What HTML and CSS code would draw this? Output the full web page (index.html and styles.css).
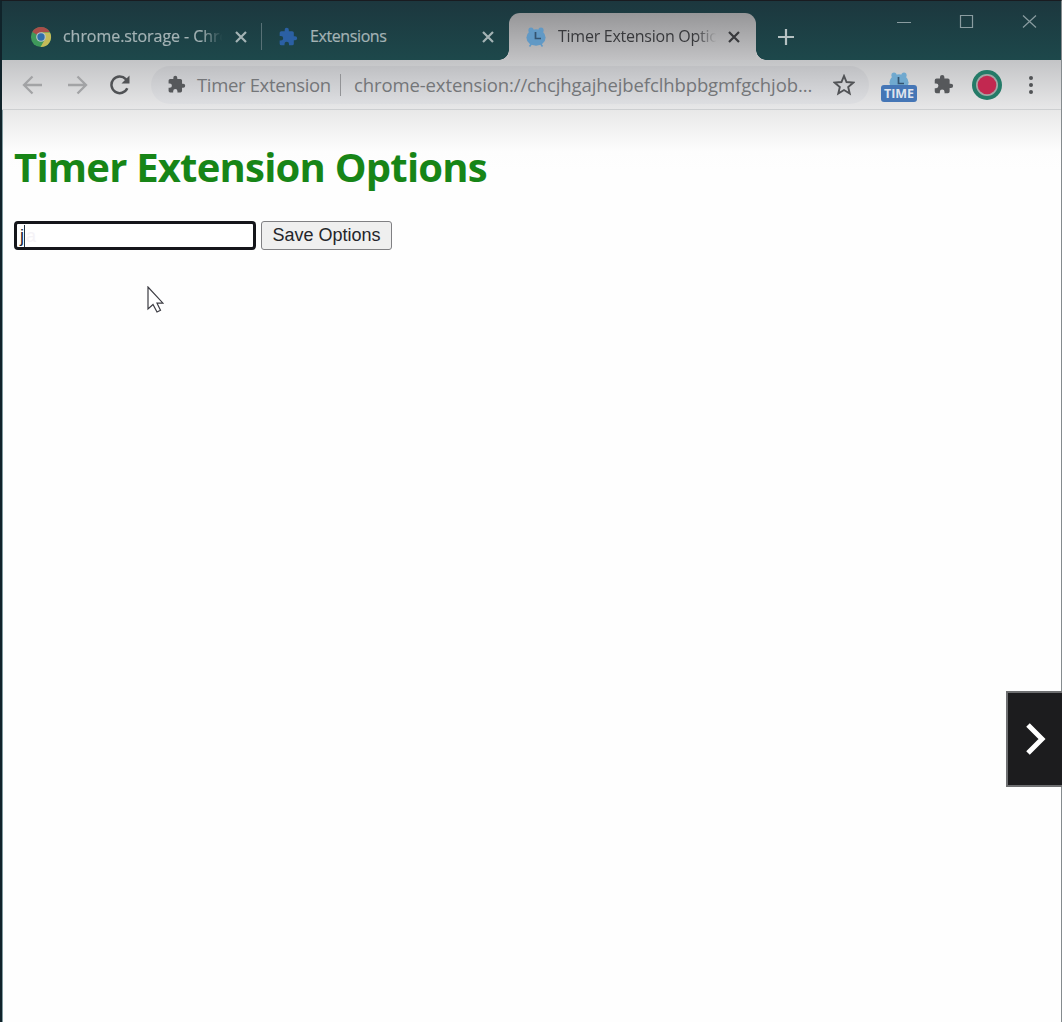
FILE: index.html
```
<!DOCTYPE html>
<html lang="en">
<head>
<meta charset="utf-8">
<title>Timer Extension Options</title>
<link rel="stylesheet" href="styles.css">
</head>
<body>
<svg class="defs" width="0" height="0">
  <symbol id="puzzle" viewBox="0 0 24 24"><path d="M20.500 11H19V7a2 2 0 0 0-2-2h-4V3.500a2.500 2.500 0 0 0-5 0V5H4a2 2 0 0 0-2 2v3.800h1.500a2.700 2.700 0 0 1 0 5.400H2V20a2 2 0 0 0 2 2h3.800v-1.500a2.700 2.700 0 0 1 5.400 0V22H17a2 2 0 0 0 2-2v-4h1.500a2.500 2.500 0 0 0 0-5z"/></symbol>
  <symbol id="cross" viewBox="0 0 12 12"><path d="M1 1 11 11M11 1 1 11" fill="none" stroke="currentColor" stroke-width="2.200"/></symbol>
  <symbol id="clock" viewBox="0 0 20 20"><circle cx="5" cy="3.200" r="2.600"/><circle cx="15" cy="3.200" r="2.600"/><path d="M3.500 19.500 6 16M16.500 19.500 14 16" stroke="currentColor" stroke-width="1.600"/><ellipse cx="10" cy="10.500" rx="9.600" ry="8.200"/><path d="M9.500 5v6.500H15" fill="none" stroke="#34536f" stroke-width="1.700"/></symbol>
</svg>
<div class="window">
  <header class="tabstrip">
    <div class="tab tab-first">
      <svg class="favicon chrome" viewBox="0 0 24 24"><circle cx="12" cy="12" r="11" fill="#3f995b"/><path d="M12 12 2.500 6.500A11 11 0 0 1 21.500 6.500L12 7z" fill="#a94d49"/><path d="M12 7h9.800A11 11 0 0 1 11.500 23L16.300 14.500z" fill="#c5bb59"/><circle cx="12" cy="12" r="5.300" fill="#b5c2c9"/><circle cx="12" cy="12" r="4" fill="#2f6eab"/></svg>
      <span class="title storage">chrome.storage - Chro</span>
      <svg class="close"><use href="#cross"/></svg>
    </div>
    <div class="tab tab-second">
      <svg class="favicon blue"><use href="#puzzle"/></svg>
      <span class="title extensions">Extensions</span>
      <svg class="close"><use href="#cross"/></svg>
    </div>
    <div class="tab tab-active">
      <svg class="favicon alarm"><use href="#clock"/></svg>
      <span class="title active-title">Timer Extension Optio</span>
      <svg class="close"><use href="#cross"/></svg>
    </div>
    <svg class="newtab" viewBox="0 0 18 18"><path d="M9 1v16M1 9h16" stroke="currentColor" stroke-width="2.200"/></svg>
    <svg class="controls" viewBox="0 0 142 16" fill="none" stroke="currentColor" stroke-width="1.200"><path d="M1 8.500h14M127 1.500l13 12M140 1.500l-13 12"/><path d="M64.500 1.500h12v12h-12z"/></svg>
  </header>
  <div class="toolbar">
    <svg class="nav" viewBox="0 0 22 20"><path d="M20 10H3M10.500 1.500 2 10l8.500 8.500"/></svg>
    <svg class="nav forward" viewBox="0 0 22 20"><path d="M2 10h17M11.500 1.500 20 10l-8.500 8.500"/></svg>
    <svg class="reload" viewBox="0 0 20 20"><path d="M17.300 13.300A8.300 8.300 0 1 1 15.800 4.100L18 6.500" fill="none" stroke="#505255" stroke-width="2.500"/><path d="M19.500 0.500V8.500H11.500z" fill="#505255"/></svg>
    <div class="address">
      <svg class="site"><use href="#puzzle"/></svg>
      <span class="site-name">Timer Extension</span>
      <span class="divider"></span>
      <span class="url">chrome-extension://chcjhgajhejbefclhbpbgmfgchjob...</span>
      <svg class="star" viewBox="0 0 20 20"><path d="M10 1.800 12.300 7.300 18.500 7.800 13.800 11.800 15.200 17.800 10 14.600 4.800 17.800 6.200 11.800 1.500 7.800 7.700 7.300z" fill="none" stroke="#515356" stroke-width="1.700"/></svg>
    </div>
    <div class="timer-extension"><svg class="mini-clock"><use href="#clock"/></svg><span class="badge">TIME</span></div>
    <svg class="puzzle-button"><use href="#puzzle"/></svg>
    <svg class="avatar" viewBox="0 0 30 30"><circle cx="15" cy="15" r="15" fill="#247b68"/><circle cx="15" cy="15" r="11" fill="#a3a6a5"/><circle cx="15" cy="15" r="9.300" fill="#c22850"/></svg>
    <svg class="menu" viewBox="0 0 6 20"><circle cx="3" cy="3" r="2"/><circle cx="3" cy="10" r="2"/><circle cx="3" cy="17" r="2"/></svg>
  </div>
  <main class="page">
    <h1>Timer Extension Options</h1>
    <div class="form">
      <div class="field"><span class="typed">j</span><span class="ghost">a</span></div>
      <button class="save">Save Options</button>
    </div>
  </main>
</div>
<svg class="cursor" viewBox="0 0 17 28"><path d="M1 1v22l5-4.500 4 7.500 3.500-1.800-3.500-7h6z" fill="#fff" stroke="#3b3b42" stroke-width="1.200"/></svg>
<div class="next"><svg viewBox="0 0 20 32"><path d="M2 2 16 16 2 30" fill="none" stroke="#fff" stroke-width="5"/></svg></div>
</body>
</html>
```
FILE: styles.css
```
* { box-sizing: border-box; }
body { margin: 0; width: 1062px; height: 1022px; overflow: hidden; position: relative; background: #fefefe; font-family: "Open Sans", "Noto Sans", sans-serif; }
svg { display: block; flex: none; }
.defs { position: absolute; }
.window { height: 1022px; border-left: 2px solid #10232a; border-right: 1px solid #858b8e; border-top: 1px solid #191b20; box-shadow: inset 1px 0 #819ba0; }
.tabstrip { height: 59px; padding-top: 12px; display: flex; background: linear-gradient(#1c373e, #1d484b); color: #a4b3b5; }
.tab { height: 47px; display: flex; align-items: center; font-size: 16px; white-space: nowrap; position: relative; flex: none; }
.tab-first { width: 260px; padding-left: 28px; }
.tab-first::after { content: ""; width: 1px; height: 27px; margin-left: 14px; background: #587176; }
.tab-second { width: 246px; padding-left: 16px; }
.favicon { width: 22px; height: 22px; }
.favicon.blue { width: 20px; height: 20px; fill: #2b60a4; }
.title { overflow: hidden; line-height: 24px; padding-bottom: 1px; }
.storage { margin-left: 11px; width: 161px; letter-spacing: -.05px; -webkit-text-stroke: .2px; -webkit-mask-image: linear-gradient(to right, #000 86%, transparent 99%); mask-image: linear-gradient(to right, #000 86%, transparent 99%); }
.extensions { margin-left: 12px; width: 161px; letter-spacing: -.4px; -webkit-text-stroke: .2px; }
.close { width: 12px; height: 12px; margin-left: 10px; }
.tab-first .close { margin-left: 11px; }
.tab-second .close { margin-left: 11px; }
.tab-active { width: 247px; margin-left: 1px; padding-left: 17px; border-radius: 11px 11px 0 0; background: linear-gradient(#969698, #c2c2c4); color: #38393c; }
.tab-active::before, .tab-active::after { content: ""; position: absolute; bottom: 0; width: 10px; height: 10px; }
.tab-active::before { left: -10px; background: radial-gradient(circle at 0 0, transparent 9.5px, #c2c2c4 10px); }
.tab-active::after { right: -10px; background: radial-gradient(circle at 100% 0, transparent 9.500px, #c2c2c4 10px); }
.favicon.alarm { width: 20px; height: 20px; fill: #6199c5; color: #6199c5; }
.active-title { margin-left: 12px; width: 160px; letter-spacing: -.25px; -webkit-mask-image: linear-gradient(to right, #000 86%, transparent 99%); mask-image: linear-gradient(to right, #000 86%, transparent 99%); }
.newtab { width: 18px; height: 18px; margin: 15px 0 0 21px; color: #b5c1c2; }
.controls { width: 142px; height: 16px; margin: 1px 0 0 101px; color: #8a9ca0; }
.toolbar { height: 50px; display: flex; align-items: center; padding-left: 20px; border-bottom: 1px solid #cdcfd1; background: linear-gradient(#c3c4c6, #e7e7e8); }
.nav { width: 22px; height: 20px; fill: none; stroke: #a2a3a5; stroke-width: 2.300; }
.forward { margin-left: 22px; }
.reload { width: 20px; height: 20px; margin-left: 22px; }
.address { margin-left: 21px; width: 718px; height: 38px; border-radius: 19px; display: flex; align-items: center; padding-left: 16px; background: linear-gradient(#bfc0c3, #dddee1); color: #747679; font-size: 18.500px; white-space: nowrap; }
.site { width: 19px; height: 19px; fill: #56585b; }
.site-name { margin-left: 11px; width: 143px; letter-spacing: -.35px; padding-bottom: 1px; }
.divider { width: 1px; height: 22px; background: #929396; }
.url { margin-left: 13px; width: 459px; letter-spacing: -.11px; padding-bottom: 1px; }
.star { width: 22px; height: 22px; margin-left: 20px; }
.timer-extension { width: 36px; height: 32px; margin: 6px 0 0 12px; display: flex; flex-direction: column; align-items: center; overflow: hidden; }
.mini-clock { width: 20px; height: 20px; margin-top: 0; fill: #70a9cf; color: #70a9cf; }
.badge { width: 36px; height: 17px; flex: none; margin-top: -7px; border-radius: 3px; background: #4576b6; color: #dfe4ed; font: bold 12.500px/18px "Open Sans", sans-serif; text-align: center; position: relative; }
.puzzle-button { width: 21px; height: 21px; margin-left: 16px; fill: #56585b; }
.avatar { width: 30px; height: 30px; margin-left: 18px; }
.menu { width: 6px; height: 20px; margin-left: 26px; fill: #515356; }
.page { padding: 29px 12px; background: linear-gradient(#e8e8e8, #fdfdfd 42px, #fefefe 60px); height: 911px; box-shadow: inset 1px 0 #819ba0; }
h1 { margin: 0; width: 500px; height: 56px; line-height: 56px; color: #178517; font-size: 40px; font-weight: 700; letter-spacing: -.78px; white-space: nowrap; }
.form { display: flex; gap: 5px; margin-top: 26px; }
.field { width: 242px; height: 29px; border: 3px solid #15161b; border-radius: 4px; padding-left: 3px; background: #fff; display: flex; align-items: center; font: 18px/22px "Liberation Sans", sans-serif; }
.typed { color: #182331; border-right: 1px solid #25313f; margin-right: 1px; }
.ghost { color: #f5f3f7; }
.save { width: 131px; height: 29px; padding: 0; border: 1px solid #808083; border-radius: 3px; background: #efefef; color: #24252a; font: 18px "Liberation Sans", sans-serif; white-space: nowrap; }
.cursor { position: absolute; left: 147px; top: 286px; width: 17px; height: 28px; }
.next { position: absolute; right: 0; top: 691px; width: 56px; height: 96px; padding: 30px 0 0 18px; border: 2px solid #6e6f71; border-right: 0; background: #1c1c1e; }
.next svg { width: 20px; height: 32px; }
```
